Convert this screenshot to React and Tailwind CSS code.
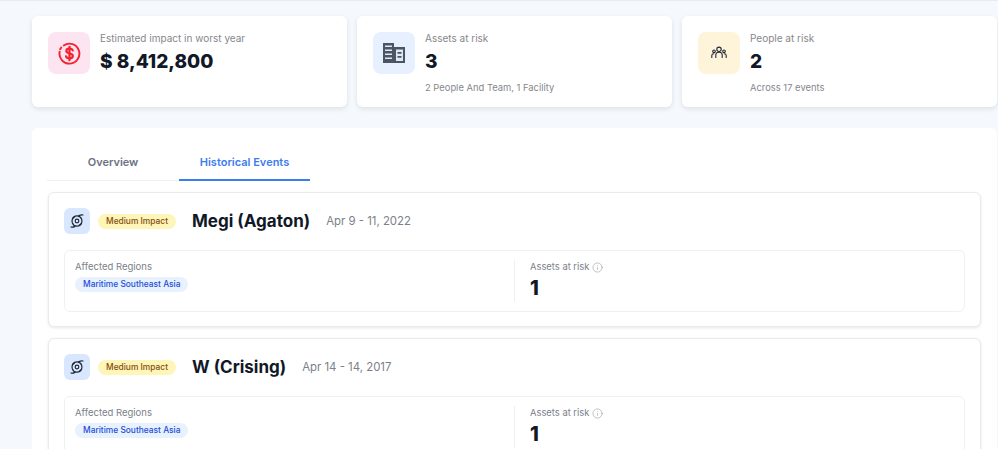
import React from "react";
import { Info } from "lucide-react";

const DollarIcon = () => (
  <svg width="23" height="23" viewBox="0 0 24 24" fill="none" stroke="#f5222d" strokeWidth="2" strokeLinecap="round">
    <path d="M6 3.600A10.400 10.400 0 1 1 1.700 10.200" />
    <path d="M2.200 7.600 3.400 5.800" />
    <path d="M15.400 8.800c-.5-1.200-1.800-1.800-3.400-1.800-1.900 0-3.300.9-3.300 2.500 0 3.400 6.800 1.500 6.800 5 0 1.600-1.500 2.500-3.500 2.500-1.700 0-3.100-.7-3.600-2" strokeWidth="2.300" />
    <path d="M12 5v14" strokeWidth="2.300" />
  </svg>
);

// solid tower on the left, lower block with a window on the right
const BuildingIcon = () => (
  <svg width="22" height="22" viewBox="0 0 22 22">
    <path d="M0 1h11v4h11v16H0z" fill="#4b5563" />
    <path d="M2 3.500h7v1.500H2zM2 7.500h7V9H2zM2 11.500h7V13H2zM2 15.500h7V17H2z" fill="#dfe8f5" />
    <path d="M13 7.500h7v11.500h-7z" fill="#dfe8f5" />
    <path d="M14.500 10h4v1.800h-4zM14.500 14h4v1.800h-4z" fill="#4b5563" />
  </svg>
);

const PeopleIcon = () => (
  <svg width="16" height="16" viewBox="0 0 16 16" fill="none" stroke="#1f2937" strokeWidth="1.100" strokeLinecap="round">
    <circle cx="8" cy="4.300" r="2.200" />
    <circle cx="3" cy="6.300" r="1.300" />
    <circle cx="13" cy="6.300" r="1.300" />
    <path d="M4.800 12.500V10c0-1.600 1.300-2.800 3.200-2.800s3.200 1.200 3.200 2.800v2.500" />
    <path d="M.8 12.500v-2c0-1 .8-1.800 2-1.800M15.200 12.500v-2c0-1-.8-1.800-2-1.800" />
  </svg>
);

const StormIcon = () => (
  <svg width="16" height="16" viewBox="0 0 16 16" fill="none" stroke="#1f2937" strokeWidth="1.200" strokeLinecap="round">
    <circle cx="8" cy="8" r="1.800" />
    <path d="M3.500 5.500A5 5 0 0 1 12.700 6.300c.6 2.200-.1 4.600-2.300 5.800" />
    <path d="M12.500 10.500a5 5 0 0 1-9.200-.8c-.6-2.200.1-4.600 2.300-5.800" />
    <path d="M10 2.600c1.500-.8 2.800-1 4-.6M6 13.400c-1.500.8-2.800 1-4 .6" />
  </svg>
);

const stats = [
  { label: "Estimated impact in worst year", value: "$ 8,412,800", tint: "bg-[#fce4f1]", icon: <DollarIcon /> },
  { label: "Assets at risk", value: "3", note: "2 People And Team, 1 Facility", tint: "bg-[#e6f0fe]", icon: <BuildingIcon /> },
  { label: "People at risk", value: "2", note: "Across 17 events", tint: "bg-[#fef4d9]", icon: <PeopleIcon /> },
];

const events = [
  { name: "Megi (Agaton)", dates: "Apr 9 - 11, 2022" },
  { name: "W (Crising)", dates: "Apr 14 - 14, 2017" },
];

const StatCard = ({ stat }) => (
  <div className="flex h-[91px] gap-[10px] rounded-md bg-white pl-4 pt-4 shadow-[0_2px_5px_rgba(15,23,42,0.1)]">
    <div className={`flex h-[42px] w-[42px] items-center justify-center rounded-lg ${stat.tint}`}>
      {stat.icon}
    </div>
    <div>
      <p className="text-[10px] leading-[13px] text-[#85878c]">{stat.label}</p>
      <p className="mt-[3px] text-[19px] leading-[27px] font-extrabold text-[#111827]">{stat.value}</p>
      {stat.note && <p className="mt-[6px] text-[9.4px] leading-[13px] text-[#85878c]">{stat.note}</p>}
    </div>
  </div>
);

const EventCard = ({ event }) => (
  <div className="h-[135px] shrink-0 rounded-md border border-[#e8eaed] bg-white px-[15px] pt-[15px] shadow-[0_1px_3px_rgba(15,23,42,0.1)]">
    <div className="flex h-[26px] items-center">
      <div className="flex h-[26px] w-[26px] items-center justify-center rounded-md bg-[#d8e7fd]">
        <StormIcon />
      </div>
      <span className="ml-2 rounded-full bg-[#fef5b8] px-2 py-px text-[8.4px] leading-[13px] font-medium text-[#854d0e]">
        Medium Impact
      </span>
      <h2 className="ml-4 text-[17px] leading-[24px] font-bold text-[#111827]">{event.name}</h2>
      <span className="ml-4 pt-px text-[11.4px] text-[#7b8089]">{event.dates}</span>
    </div>
    <div className="mt-4 flex h-[62px] rounded-md border border-[#eef0f2] py-[9px] pl-[10px]">
      <div className="w-[440px] border-r border-[#eef0f2]">
        <p className="text-[9.5px] leading-[14px] text-[#7b8089]">Affected Regions</p>
        <span className="mt-[3px] block w-fit rounded-full bg-[#e8f1fe] px-2 py-px text-[8.4px] leading-[13px] font-medium text-[#1d4ed8]">
          Maritime Southeast Asia
        </span>
      </div>
      <div className="pl-[15px]">
        <p className="flex items-center gap-[3px] text-[9.4px] leading-[14px] text-[#7b8089]">
          Assets at risk <Info size={11} strokeWidth={1} />
        </p>
        <p className="mt-[2px] text-[20px] leading-[24px] font-extrabold text-[#111827]">1</p>
      </div>
    </div>
  </div>
);

export default function App() {
  return (
    <div className="h-screen overflow-hidden border-t border-[#e8ebef] bg-[#f5f9fd] pl-8 pr-px pt-[15px] font-['Inter','Liberation_Sans',sans-serif]">
      <div className="grid grid-cols-3 gap-[10px]">
        {stats.map((stat) => (
          <StatCard key={stat.label} stat={stat} />
        ))}
      </div>
      <div className="mt-[21px] rounded-md bg-white px-4 pt-4">
        <div className="-ml-px flex h-[37px] w-[263px] border-b border-[#eef0f2] pt-px text-[11px] font-semibold">
          <div className="flex w-[132px] items-center justify-center text-[#6b7280]">Overview</div>
          <div className="-mb-px flex w-[131px] items-center justify-center border-b-2 border-[#3b7cf0] text-[#3b7cf0]">
            Historical Events
          </div>
        </div>
        <div className="mt-[11px] flex flex-col gap-[11px]">
          {events.map((event) => (
            <EventCard key={event.name} event={event} />
          ))}
        </div>
      </div>
    </div>
  );
}
